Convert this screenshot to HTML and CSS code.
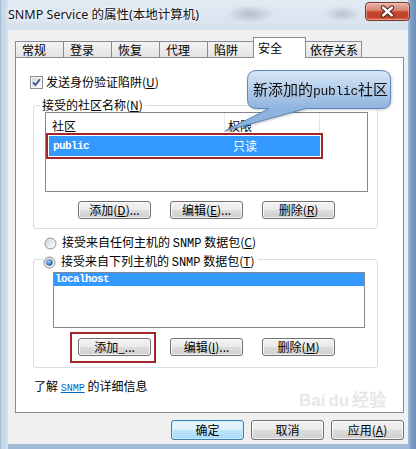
FILE: index.html
```html
<!DOCTYPE html>
<html lang="zh-CN">
<head>
<meta charset="utf-8">
<title>SNMP Service 的属性(本地计算机)</title>
<link rel="stylesheet" href="styles.css">
</head>
<body>
<div class="window">
  <div class="titlebar">
    <span class="title">SNMP Service 的属性(本地计算机)</span>
    <div class="close-btn">
      <svg width="43" height="17" viewBox="0 0 43 17">
        <path d="M17 4.5 L26 12.5 M26 4.5 L17 12.5" stroke="#4a1a12" stroke-width="4.4" stroke-linecap="round"/>
        <path d="M17 4.5 L26 12.5 M26 4.5 L17 12.5" stroke="#ffffff" stroke-width="2.4" stroke-linecap="round"/>
      </svg>
    </div>
  </div>
  <div class="client">
    <div class="tabs">
      <div class="tab">常规</div>
      <div class="tab">登录</div>
      <div class="tab">恢复</div>
      <div class="tab">代理</div>
      <div class="tab">陷阱</div>
      <div class="tab active">安全</div>
      <div class="tab">依存关系</div>
    </div>
    <div class="page">
      <div class="check-row">
        <svg class="cb" width="13" height="13" viewBox="0 0 13 13">
          <defs><linearGradient id="cbg" x1="0" y1="0" x2="1" y2="1"><stop offset="0" stop-color="#d4d7db"/><stop offset="1" stop-color="#fbfbfb"/></linearGradient></defs>
          <rect x=".5" y=".5" width="12" height="12" fill="#f6f6f6" stroke="#8e8f8f"/>
          <rect x="2" y="2" width="9" height="9" fill="url(#cbg)"/>
          <path d="M3 6.4 L5.4 9 L10 3.3" fill="none" stroke="#3d5490" stroke-width="1.8"/>
        </svg>
        <span>发送身份验证陷阱(<u>U</u>)</span>
      </div>

      <fieldset class="group g1">
        <legend>接受的社区名称(<u>N</u>)</legend>
        <div class="inner">
          <div class="listview">
            <div class="lv-header">
              <span class="h1">社区</span>
              <span class="h2">权限</span>
              <span class="h3"></span>
            </div>
            <div class="lv-row">
              <span class="r1 mono">public</span>
              <span class="r2">只读</span>
            </div>
          </div>
          <div class="btnrow">
            <button class="btn">添加(<u>D</u>)...</button>
            <button class="btn">编辑(<u>E</u>)...</button>
            <button class="btn">删除(<u>R</u>)</button>
          </div>
        </div>
      </fieldset>

      <div class="radio-row">
        <svg width="13" height="13" viewBox="0 0 13 13">
          <defs><linearGradient id="rg1" x1="0" y1="0" x2="1" y2="1"><stop offset="0" stop-color="#cfd2d6"/><stop offset="1" stop-color="#ffffff"/></linearGradient></defs>
          <circle cx="6.5" cy="6.5" r="5.5" fill="url(#rg1)" stroke="#8e8f8f"/>
        </svg>
        <span>接受来自任何主机的 <span class="mono-s">SNMP</span> 数据包(<u>C</u>)</span>
      </div>

      <fieldset class="group g2">
        <legend>
          <span class="radio-label">
            <svg width="13" height="13" viewBox="0 0 13 13">
              <defs>
                <linearGradient id="rg2" x1="0" y1="0" x2="1" y2="1"><stop offset="0" stop-color="#cfd2d6"/><stop offset="1" stop-color="#ffffff"/></linearGradient>
                <radialGradient id="rsel" cx="0.4" cy="0.35" r="0.7"><stop offset="0" stop-color="#a6d3f7"/><stop offset="0.6" stop-color="#3f84c9"/><stop offset="1" stop-color="#1b4f92"/></radialGradient>
              </defs>
              <circle cx="6.5" cy="6.5" r="5.5" fill="url(#rg2)" stroke="#8e8f8f"/>
              <circle cx="6.5" cy="6.5" r="3.2" fill="url(#rsel)"/>
            </svg>
            <span>接受来自下列主机的 <span class="mono-s">SNMP</span> 数据包(<u>T</u>)</span>
          </span>
        </legend>
        <div class="inner">
          <div class="listbox">
            <div class="lb-row mono">localhost</div>
          </div>
          <div class="btnrow">
            <span class="annot"><button class="btn">添加_...</button></span>
            <button class="btn">编辑(<u>I</u>)...</button>
            <button class="btn">删除(<u>M</u>)</button>
          </div>
        </div>
      </fieldset>

      <div class="more">了解 <a class="link mono-l">SNMP</a> 的详细信息</div>

      <div class="callout">
        <svg width="172" height="67" viewBox="0 0 172 67">
          <defs>
            <linearGradient id="cg" gradientUnits="userSpaceOnUse" x1="0" y1="2" x2="0" y2="41"><stop offset="0" stop-color="#d8e8f8"/><stop offset="1" stop-color="#8eb3dd"/></linearGradient>
          </defs>
          <path d="M37 2.5 H161 Q170.5 2.5 170.5 11.5 V31.5 Q170.5 40.5 161 40.5 H86 L5 63 L49 40.5 H37 Q27.5 40.5 27.5 31.5 V11.5 Q27.5 2.5 37 2.5 Z" fill="url(#cg)" stroke="#5b87ba"/>
        </svg>
        <span class="callout-text">新添加的<span class="mono-c">public</span>社区</span>
      </div>

      <div class="watermark">Bai<span class="paw">du</span>经验</div>
    </div>
    <div class="footer">
      <button class="btn btn-lg default">确定</button>
      <button class="btn btn-lg">取消</button>
      <button class="btn btn-lg">应用(<u>A</u>)</button>
    </div>
  </div>
</div>
</body>
</html>
```

FILE: styles.css
```css
* { box-sizing: border-box; }
html, body { margin: 0; padding: 0; }
body {
  width: 416px;
  height: 449px;
  overflow: hidden;
  font-family: "Noto Sans CJK SC", "Noto Sans", sans-serif;
  font-size: 12px;
  color: #000;
  background: #c9d8e8;
}
u { text-decoration: underline; text-underline-offset: 1px; }

.window {
  position: relative;
  width: 416px;
  height: 449px;
  display: flex;
  flex-direction: column;
  padding-bottom: 5px;
  background:
    linear-gradient(90deg, #8ea9c6 0, #bfd2e6 1px, #cbdbeb 5px, #d5e1ed 8px, rgba(0,0,0,0) 8px, rgba(0,0,0,0) 408px, #a9bfd8 408px, #7d9ec6 411px, #6a8fbb 416px),
    linear-gradient(180deg, #e2eaf2 0, #d6e2ee 30px, #c8d8e9 420px, #9db8d6 449px);
}

.titlebar {
  height: 30px;
  flex: none;
  display: flex;
  justify-content: space-between;
  align-items: flex-start;
  padding: 0 6px 0 8px;
  background:
    radial-gradient(24px 9px at 250px 14px, rgba(105,115,130,.35), rgba(105,115,130,0)),
    radial-gradient(18px 8px at 342px 14px, rgba(105,115,130,.3), rgba(105,115,130,0));
}
.title {
  line-height: 30px;
  font-family: "Noto Sans", "Noto Sans CJK SC", sans-serif;
  font-size: 12.5px;
  color: #111;
  text-shadow: 0 0 6px #fff, 0 0 3px #fff;
}
.close-btn {
  margin-top: 2px;
  width: 45px;
  height: 19px;
  border: 1px solid #7a3328;
  border-radius: 4px;
  background: linear-gradient(180deg, #eab2a5 0%, #dc8877 42%, #c64a32 52%, #c13f27 80%, #d86a50 100%);
  box-shadow: inset 0 0 0 1px rgba(255,220,210,.45);
  display: flex;
  align-items: center;
  justify-content: center;
}

.client {
  flex: 1;
  margin: 0 8px;
  background: #f0f0f0;
  padding: 7px 4px 0 7px;
  display: flex;
  flex-direction: column;
}

.tabs {
  display: flex;
  align-items: flex-end;
  height: 20px;
  position: relative;
  z-index: 1;
}
.tab {
  min-width: 49px;
  height: 16px;
  margin-right: -1px;
  padding: 0 3px 0 6px;
  border: 1px solid #898c95;
  border-bottom: 0;
  background: linear-gradient(180deg, #f4f4f4, #e3e3e3);
  line-height: 15px;
  white-space: nowrap;
}
.tab.active {
  min-width: 53px;
  height: 21px;
  margin: 0 -3px -1px -2px;
  padding-left: 4px;
  background: #fff;
  line-height: 20px;
  position: relative;
  z-index: 2;
}

.page {
  position: relative;
  height: 356px;
  background: #fff;
  border: 1px solid #898c95;
}

.check-row {
  display: flex;
  align-items: center;
  gap: 3px;
  height: 14px;
  line-height: 14px;
  margin: 17px 0 0 14px;
}

.group {
  margin: 0 0 0 17px;
  padding: 0;
  width: 345px;
  min-width: 0;
  border: 1px solid #d5dfe5;
  border-radius: 3px;
}
.group legend {
  padding: 0 2px;
  margin-left: 6px;
  line-height: 14px;
}
.g1 { margin-top: 9px; }
.g1 .inner { padding: 0 9px 9px 11px; }

.g2 { margin-top: -1px; }
.g2 legend {
  padding: 6px 3px 0 0;
  margin-left: 9px;
}
.radio-label {
  display: flex;
  align-items: center;
  gap: 5px;
  height: 14px;
  line-height: 14px;
}
.g2 .inner { padding: 3px 9px 11px 19px; }

.radio-row {
  display: flex;
  align-items: center;
  gap: 5px;
  height: 14px;
  line-height: 14px;
  margin: 7px 0 0 28px;
}

.listview {
  width: 323px;
  height: 80px;
  border: 1px solid #828790;
  background: #fff;
}
.lv-header {
  display: flex;
  height: 22px;
}
.lv-header span {
  padding: 6px 0 0 6px;
  line-height: 14px;
  border-right: 1px solid #e5e5e5;
}
.lv-header .h1 { width: 179px; }
.lv-header .h2 { width: 95px; padding-left: 3px; }
.lv-header .h3 { flex: 1; border-right: 0; }

.lv-row {
  display: flex;
  width: 271px;
  height: 20px;
  margin: 1px 0 0 3px;
  background: #3399ff;
  color: #fff;
  line-height: 20px;
  outline: 2px solid #a3262b;
  outline-offset: 1px;
}
.lv-row .r1 { width: 176px; padding-left: 4px; }
.lv-row .r2 { padding-left: 8px; }

.listbox {
  width: 312px;
  height: 56px;
  border: 1px solid #828790;
  background: #fff;
}
.lb-row {
  height: 13px;
  line-height: 13px;
  padding-left: 1px;
  background: #3399ff;
  color: #fff;
}

.mono {
  font-family: "Liberation Mono", "DejaVu Sans Mono", monospace;
  font-size: 11px;
  letter-spacing: -0.6px;
  font-weight: bold;
}
.mono-s {
  font-family: "Liberation Mono", "DejaVu Sans Mono", monospace;
  font-size: 12px;
}
.mono-l {
  font-family: "Liberation Mono", "DejaVu Sans Mono", monospace;
  font-size: 10px;
}

.btnrow {
  display: flex;
  gap: 19px;
  margin-top: 9px;
  padding-left: 33px;
}
.g2 .btnrow { margin-top: 10px; padding-left: 25px; }

.btn {
  appearance: none;
  margin: 0;
  padding: 0;
  width: 73px;
  height: 18px;
  border: 1px solid #707070;
  border-radius: 3px;
  background: linear-gradient(180deg, #f2f2f2 0%, #ebebeb 49%, #dddddd 50%, #cfcfcf 100%);
  box-shadow: inset 0 0 0 1px rgba(255,255,255,.75);
  font-family: "Noto Sans CJK SC", "Noto Sans", sans-serif;
  font-size: 12px;
  line-height: 14px;
  color: #000;
  display: flex;
  align-items: center;
  justify-content: center;
  white-space: nowrap;
}
.btn-lg { height: 20px; }
.btn.default {
  border-color: #3c7fb1;
  background: linear-gradient(180deg, #eaf6fd 0%, #d9f0fc 49%, #bee6fd 50%, #a7d9f5 100%);
  box-shadow: inset 0 0 0 1px rgba(200,240,255,.9);
}

.annot {
  position: relative;
  display: block;
}
.annot::after {
  content: "";
  position: absolute;
  left: -8px;
  right: -5px;
  top: -6px;
  bottom: -7px;
  border: 2px solid #a3262b;
}

.more {
  margin: 11px 0 0 18px;
  line-height: 14px;
}
.link {
  color: #0066cc;
  text-decoration: underline;
}

.callout {
  position: absolute;
  left: 204px;
  top: 10px;
  width: 172px;
  height: 67px;
  filter: drop-shadow(1px 1px 1px rgba(0,0,0,.2));
}
.callout svg { display: block; }
.callout-text {
  position: absolute;
  left: 33px;
  top: 11px;
  font-size: 15px;
  line-height: 20px;
  color: #111;
  white-space: nowrap;
}
.mono-c {
  font-family: "Liberation Mono", "DejaVu Sans Mono", monospace;
  font-size: 13px;
  letter-spacing: -0.3px;
}

.footer {
  display: flex;
  justify-content: flex-end;
  gap: 7px;
  margin-top: 7px;
}

.watermark {
  position: absolute;
  left: 283px;
  top: 333px;
  font-family: "Liberation Sans", sans-serif;
  font-size: 17px;
  line-height: 20px;
  font-weight: bold;
  color: rgba(185,185,185,.35);
  white-space: nowrap;
}
.watermark .paw { margin: 0 3px; }
```
